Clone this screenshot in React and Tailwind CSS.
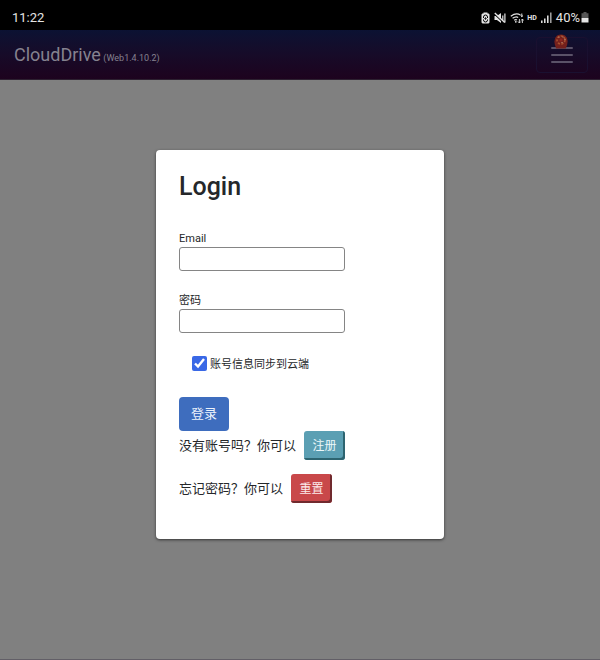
import React from "react";

function StatusIcons() {
  return (
    <div className="flex items-center text-[#e4e4e4]">
      <svg className="mr-1 h-3 w-[9px]" viewBox="0 0 9 12" aria-hidden="true">
        <path d="M2.5 0.5h4v1h1.2l.8 1v8l-1 1h-6l-1-1v-8l.8-1h1.2z" fill="currentColor" />
        <path d="M2.5 6V5a2 2 0 0 1 4 0v1M2.5 7.500v.5a2 2 0 0 0 4 0v-.5" fill="none" stroke="#000" strokeWidth="1" />
        <path d="M4.5 5v3M3.200 6.500h2.600" stroke="#000" strokeWidth="0.7" />
      </svg>
      <svg className="mr-1 h-3 w-3" viewBox="0 0 12 12" aria-hidden="true">
        <path d="M0.5 4h2.4L7 1v10L2.9 8H0.5z" fill="currentColor" />
        <path d="M8.8 3.4v5.2M10.9 1.6v8.8" stroke="currentColor" strokeWidth="1.200" />
        <path d="M0.5 2l10 9.600" stroke="#000" strokeWidth="1.200" />
        <path d="M.8 1l10 9.600" stroke="currentColor" strokeWidth="1.400" />
      </svg>
      <svg className="mr-[3px] h-3 w-[14px]" viewBox="0 0 14 12" aria-hidden="true">
        <path d="M.8 4.2Q6 .4 10.4 3M2.6 6.3Q5.8 4 8.2 5.4M4.2 8.3Q5.8 7.1 7 8" fill="none" stroke="currentColor" strokeWidth="1.2" />
        <circle cx="5.8" cy="9.8" r=".9" fill="currentColor" />
        <path d="M11.8 1.500v3.200M10.600 3.500l1.200 1.200L13 3.500" fill="none" stroke="currentColor" strokeWidth="1" />
        <path d="M9.4 7v4M8 9.500l1.4 1.500 1.4-1.500M12.4 11V7M11.2 8.500l1.200-1.500L13.600 8.500" fill="none" stroke="currentColor" strokeWidth=".9" />
      </svg>
      <span className="mr-1 text-[7px] font-bold leading-3">HD</span>
      <svg className="mr-1 h-[11px] w-[11px]" viewBox="0 0 11 11" aria-hidden="true">
        <path d="M.8 8.5V11M3.8 6.5V11M6.800 3.500V11" stroke="currentColor" strokeWidth="1.5" />
        <path d="M9.8.5V11" stroke="#a5a5a5" strokeWidth="1.5" />
      </svg>
      <span className="text-[13px] leading-4">40%</span>
      <svg className="ml-px h-[11px] w-2" viewBox="0 0 8 11" aria-hidden="true">
        <path d="M2.5 0h3v1.2H7.5V6H.5V1.2h2z" fill="#555" />
        <path d="M.5 6h7v4.5h-7z" fill="currentColor" />
      </svg>
    </div>
  );
}

function Badge() {
  return (
    <svg className="absolute -top-1 left-4 h-4 w-4" viewBox="0 0 16 16" aria-hidden="true">
      <path d="M4 1.500Q8-.5 12 1.500q3 2.500 2.600 6.500-.3 3.500-1.800 6.500H3.200Q1.700 11.500 1.400 8 1.200 4 4 1.500z" fill="#74201c" />
      <circle cx="8" cy="6" r="4" fill="none" stroke="#a8502f" strokeWidth="1.6" strokeDasharray="2.200 1.400" />
      <path d="M5.500 3.200h1M9.500 3h1M11.500 5.500h1M8.500 8.500h1" stroke="#c09a86" strokeWidth="1" />
      <circle cx="8" cy="6" r="1.6" fill="#8f251f" />
    </svg>
  );
}

function Field({ id, label, type }) {
  return (
    <div className="flex flex-col items-start">
      <label htmlFor={id} className="text-[11px] leading-[17px]">{label}</label>
      <input id={id} type={type} className="h-6 w-[166px] rounded-[3px] border border-[#858585] bg-white px-1 text-xs outline-none" />
    </div>
  );
}

export default function App() {
  return (
    <div className="flex min-h-screen flex-col border-b border-[#625f67] bg-[#808080] font-[Roboto,'Noto_Sans_CJK_SC',sans-serif] text-[#25272a]">
      <div className="flex h-[30px] items-center justify-between bg-black pl-3 pr-[11px] pt-[5px] text-[#e4e4e4]">
        <span className="text-[13px] leading-4">11:22</span>
        <StatusIcons />
      </div>
      <header className="flex h-[50px] items-center justify-between border-b border-[#2c2030] bg-linear-to-b from-[#0b1233] to-[#1d031e] pl-[14px] pr-3">
        <a href="#" className="pt-1 text-[18px] leading-6 text-[#85828f]">
          CloudDrive <span className="-ml-[2px] text-[9px]">(Web1.4.10.2)</span>
        </a>
        <button type="button" aria-label="Menu" className="relative flex h-9 w-[52px] items-center justify-center rounded border border-[#1a1030]">
          <span className="flex w-[22px] flex-col gap-[5px]">
            <span className="h-[2px] rounded bg-[#5a5268]" />
            <span className="h-[2px] rounded bg-[#5a5268]" />
            <span className="h-[2px] rounded bg-[#5a5268]" />
          </span>
          <Badge />
        </button>
      </header>
      <main className="flex justify-center px-4 pb-10 pt-[70px]">
        <form className="w-full max-w-[288px] rounded-[4px] bg-white px-[23px] pb-9 pt-[21px] shadow-[0_1px_3px_#333]">
          <h1 className="mb-[27px] text-[25px] font-medium leading-8">Login</h1>
          <div className="flex flex-col gap-[21px]">
            <Field id="email" label="Email" type="email" />
            <Field id="password" label="密码" type="password" />
          </div>
          <label className="mt-5 flex h-5 items-center gap-[3px] pl-[13px] text-[11px]">
            <input type="checkbox" defaultChecked className="h-[15px] w-[15px] accent-[#3968e6]" />
            <span className="pt-1">账号信息同步到云端</span>
          </label>
          <button type="button" className="mt-6 block h-[34px] rounded-[4px] bg-[#3e6dbe] px-3 text-[13px] text-[#edf3fc]">登录</button>
          <div className="flex flex-col gap-[14px] text-[13px]">
            <p className="flex items-center gap-2">
              没有账号吗？你可以
              <button type="button" className="h-[29px] w-[41px] rounded-[3px] bg-[#5b9fb3] text-[12px] text-[#edf8fa] shadow-[inset_-2px_-2px_0_#2d6470]">注册</button>
            </p>
            <p className="flex items-center gap-2">
              忘记密码？你可以
              <button type="button" className="h-[29px] w-[41px] rounded-[3px] bg-[#c9484a] text-[12px] text-[#fbeaea] shadow-[inset_-2px_-2px_0_#702a2e]">重置</button>
            </p>
          </div>
        </form>
      </main>
    </div>
  );
}
